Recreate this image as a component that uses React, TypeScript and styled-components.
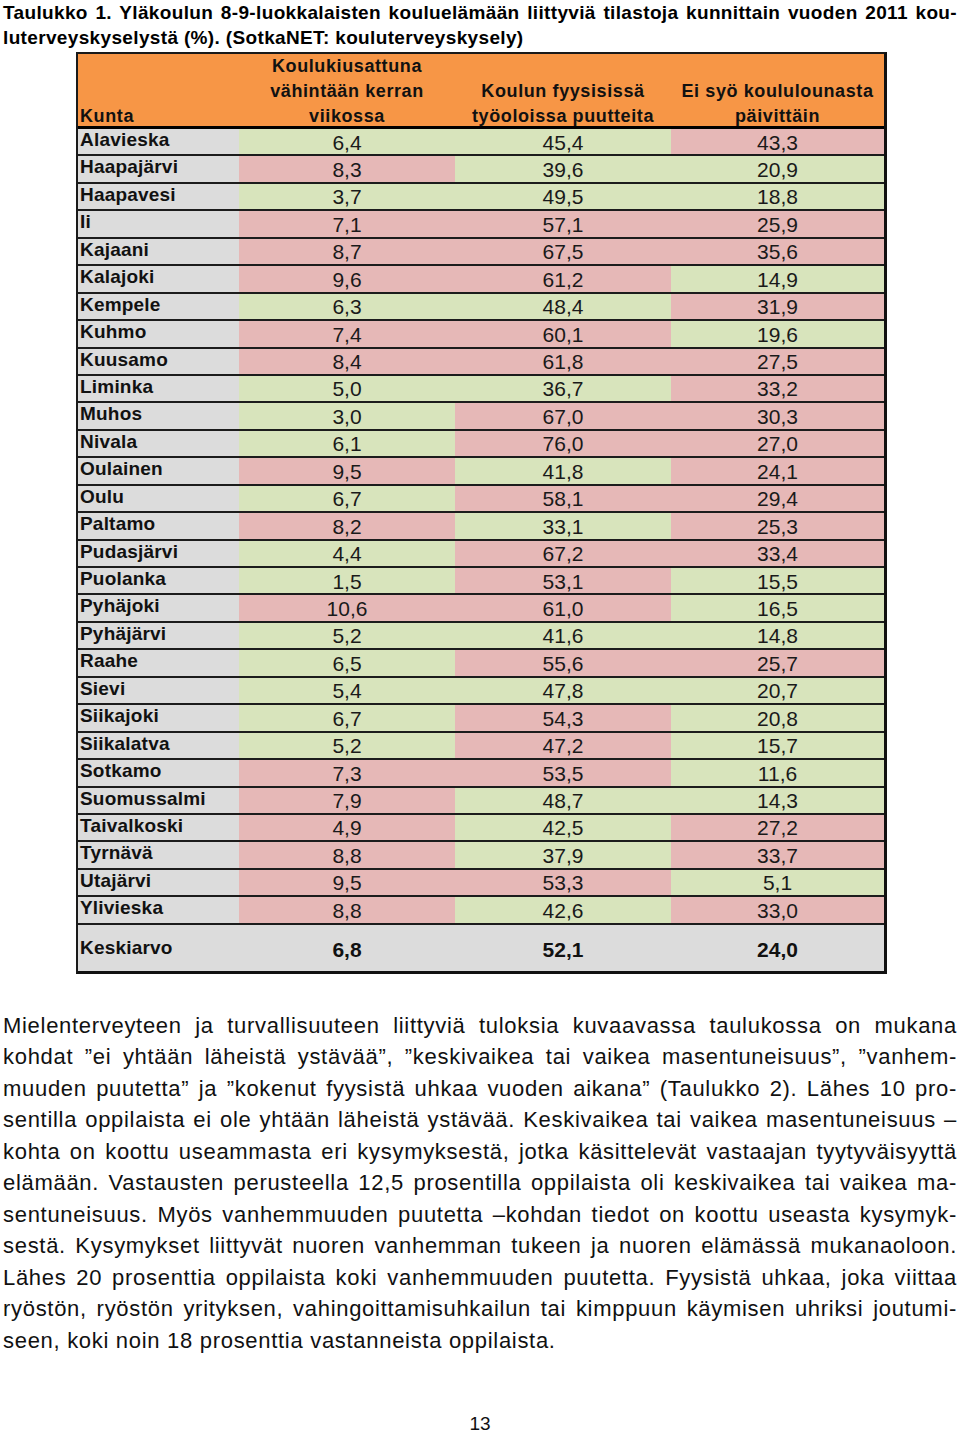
import React from "react";
import styled, { createGlobalStyle } from "styled-components";

const GlobalStyle = createGlobalStyle`
  html, body {
    margin: 0;
    padding: 0;
    background: #ffffff;
  }
  body {
    font-family: "Liberation Sans", Arial, Helvetica, sans-serif;
    color: #000000;
  }
  * { box-sizing: border-box; }
`;

type Tone = "g" | "p";
type Cell = [string, Tone];
type RowData = { name: string; cells: Cell[] };

const rows: RowData[] = [
  { name: "Alavieska", cells: [["6,4", "g"], ["45,4", "g"], ["43,3", "p"]] },
  { name: "Haapajärvi", cells: [["8,3", "p"], ["39,6", "g"], ["20,9", "g"]] },
  { name: "Haapavesi", cells: [["3,7", "g"], ["49,5", "g"], ["18,8", "g"]] },
  { name: "Ii", cells: [["7,1", "p"], ["57,1", "p"], ["25,9", "p"]] },
  { name: "Kajaani", cells: [["8,7", "p"], ["67,5", "p"], ["35,6", "p"]] },
  { name: "Kalajoki", cells: [["9,6", "p"], ["61,2", "p"], ["14,9", "g"]] },
  { name: "Kempele", cells: [["6,3", "g"], ["48,4", "g"], ["31,9", "p"]] },
  { name: "Kuhmo", cells: [["7,4", "p"], ["60,1", "p"], ["19,6", "g"]] },
  { name: "Kuusamo", cells: [["8,4", "p"], ["61,8", "p"], ["27,5", "p"]] },
  { name: "Liminka", cells: [["5,0", "g"], ["36,7", "g"], ["33,2", "p"]] },
  { name: "Muhos", cells: [["3,0", "g"], ["67,0", "p"], ["30,3", "p"]] },
  { name: "Nivala", cells: [["6,1", "g"], ["76,0", "p"], ["27,0", "p"]] },
  { name: "Oulainen", cells: [["9,5", "p"], ["41,8", "g"], ["24,1", "p"]] },
  { name: "Oulu", cells: [["6,7", "g"], ["58,1", "p"], ["29,4", "p"]] },
  { name: "Paltamo", cells: [["8,2", "p"], ["33,1", "g"], ["25,3", "p"]] },
  { name: "Pudasjärvi", cells: [["4,4", "g"], ["67,2", "p"], ["33,4", "p"]] },
  { name: "Puolanka", cells: [["1,5", "g"], ["53,1", "p"], ["15,5", "g"]] },
  { name: "Pyhäjoki", cells: [["10,6", "p"], ["61,0", "p"], ["16,5", "g"]] },
  { name: "Pyhäjärvi", cells: [["5,2", "g"], ["41,6", "g"], ["14,8", "g"]] },
  { name: "Raahe", cells: [["6,5", "g"], ["55,6", "p"], ["25,7", "p"]] },
  { name: "Sievi", cells: [["5,4", "g"], ["47,8", "g"], ["20,7", "g"]] },
  { name: "Siikajoki", cells: [["6,7", "g"], ["54,3", "p"], ["20,8", "g"]] },
  { name: "Siikalatva", cells: [["5,2", "g"], ["47,2", "p"], ["15,7", "g"]] },
  { name: "Sotkamo", cells: [["7,3", "p"], ["53,5", "p"], ["11,6", "g"]] },
  { name: "Suomussalmi", cells: [["7,9", "p"], ["48,7", "g"], ["14,3", "g"]] },
  { name: "Taivalkoski", cells: [["4,9", "p"], ["42,5", "g"], ["27,2", "p"]] },
  { name: "Tyrnävä", cells: [["8,8", "p"], ["37,9", "g"], ["33,7", "p"]] },
  { name: "Utajärvi", cells: [["9,5", "p"], ["53,3", "p"], ["5,1", "g"]] },
  { name: "Ylivieska", cells: [["8,8", "p"], ["42,6", "g"], ["33,0", "p"]] },
];

const paragraphLines = [
  "Mielenterveyteen ja turvallisuuteen liittyviä tuloksia kuvaavassa taulukossa on mukana",
  "kohdat ”ei yhtään läheistä ystävää”, ”keskivaikea tai vaikea masentuneisuus”, ”vanhem-",
  "muuden puutetta” ja ”kokenut fyysistä uhkaa vuoden aikana” (Taulukko 2). Lähes 10 pro-",
  "sentilla oppilaista ei ole yhtään läheistä ystävää. Keskivaikea tai vaikea masentuneisuus –",
  "kohta on koottu useammasta eri kysymyksestä, jotka käsittelevät vastaajan tyytyväisyyttä",
  "elämään. Vastausten perusteella 12,5 prosentilla oppilaista oli keskivaikea tai vaikea ma-",
  "sentuneisuus. Myös vanhemmuuden puutetta –kohdan tiedot on koottu useasta kysymyk-",
  "sestä. Kysymykset liittyvät nuoren vanhemman tukeen ja nuoren elämässä mukanaoloon.",
  "Lähes 20 prosenttia oppilaista koki vanhemmuuden puutetta. Fyysistä uhkaa, joka viittaa",
  "ryöstön, ryöstön yrityksen, vahingoittamisuhkailun tai kimppuun käymisen uhriksi joutumi-",
  "seen, koki noin 18 prosenttia vastanneista oppilaista.",
];

const toneColor: Record<Tone, string> = {
  g: "#d8e4bc",
  p: "#e6b8b7",
};

const COLS = "161px 216px 216px 213px";

const Page = styled.div`
  width: 960px;
  padding: 0 3px;
`;

const Title = styled.div`
  font-size: 19px;
  font-weight: 700;
  line-height: 25px;
  letter-spacing: 0.35px;
`;

const Line = styled.div<{ $justify?: boolean }>`
  text-align: ${(p) => (p.$justify ? "justify" : "left")};
  text-align-last: ${(p) => (p.$justify ? "justify" : "left")};
`;

const Table = styled.div`
  margin: 2px 0 0 73px;
  width: 811px;
  border-top: 2px solid #1a1a1a;
  border-left: 2px solid #1a1a1a;
  border-right: 3px solid #111111;
  border-bottom: 3px solid #111111;
`;

const HeaderRow = styled.div`
  display: grid;
  grid-template-columns: ${COLS};
  height: 75px;
  background: #f79646;
  border-bottom: 3px solid #000000;
`;

const HeaderCell = styled.div<{ $left?: boolean }>`
  display: flex;
  flex-direction: column;
  justify-content: flex-end;
  align-items: ${(p) => (p.$left ? "flex-start" : "center")};
  text-align: ${(p) => (p.$left ? "left" : "center")};
  padding: 0 0 3px ${(p) => (p.$left ? "2px" : "0")};
  font-size: 18px;
  font-weight: 700;
  line-height: 25px;
  letter-spacing: 0.6px;
  color: #111111;
  white-space: nowrap;
`;

const Row = styled.div`
  display: grid;
  grid-template-columns: ${COLS};
  height: 27.45px;
  border-bottom: 2px solid #1c1c1c;
`;

const NameCell = styled.div`
  background: #dcdcdc;
  padding: 1px 0 0 2px;
  font-size: 19px;
  font-weight: 700;
  line-height: 20px;
  letter-spacing: 0.2px;
  color: #111111;
  white-space: nowrap;
  overflow: hidden;
`;

const ValueCell = styled.div<{ $tone: Tone }>`
  background: ${(p) => toneColor[p.$tone]};
  padding-top: 1.5px;
  text-align: center;
  font-size: 21px;
  line-height: 24px;
  color: #1a1a1a;
  overflow: hidden;
`;

const AverageRow = styled.div`
  display: grid;
  grid-template-columns: ${COLS};
  height: 46px;
  background: #dcdcdc;
`;

const AverageName = styled.div`
  padding: 13px 0 0 2px;
  font-size: 19px;
  font-weight: 700;
  line-height: 20px;
  letter-spacing: 0.2px;
  color: #111111;
`;

const AverageValue = styled.div`
  padding-top: 13.5px;
  text-align: center;
  font-size: 21px;
  font-weight: 700;
  line-height: 24px;
  color: #111111;
`;

const Paragraph = styled.div`
  margin-top: 36px;
  font-size: 22px;
  line-height: 31.5px;
  letter-spacing: 0.7px;
  color: #111111;
`;

const PageNumber = styled.div`
  margin-top: 57px;
  text-align: center;
  font-size: 19px;
  line-height: 22px;
  color: #111111;
`;

export default function App() {
  return (
    <>
      <GlobalStyle />
      <Page>
        <Title>
          <Line $justify>
            Taulukko 1. Yläkoulun 8-9-luokkalaisten kouluelämään liittyviä tilastoja kunnittain vuoden 2011 kou-
          </Line>
          <Line>luterveyskyselystä (%). (SotkaNET: kouluterveyskysely)</Line>
        </Title>

        <Table>
          <HeaderRow>
            <HeaderCell $left>Kunta</HeaderCell>
            <HeaderCell>
              <span>Koulukiusattuna</span>
              <span>vähintään kerran</span>
              <span>viikossa</span>
            </HeaderCell>
            <HeaderCell>
              <span>Koulun fyysisissä</span>
              <span>työoloissa puutteita</span>
            </HeaderCell>
            <HeaderCell>
              <span>Ei syö koululounasta</span>
              <span>päivittäin</span>
            </HeaderCell>
          </HeaderRow>

          {rows.map((r) => (
            <Row key={r.name}>
              <NameCell>{r.name}</NameCell>
              {r.cells.map(([v, t], i) => (
                <ValueCell key={i} $tone={t}>
                  {v}
                </ValueCell>
              ))}
            </Row>
          ))}

          <AverageRow>
            <AverageName>Keskiarvo</AverageName>
            <AverageValue>6,8</AverageValue>
            <AverageValue>52,1</AverageValue>
            <AverageValue>24,0</AverageValue>
          </AverageRow>
        </Table>

        <Paragraph>
          {paragraphLines.map((l, i) => (
            <Line key={i} $justify={i < paragraphLines.length - 1}>
              {l}
            </Line>
          ))}
        </Paragraph>

        <PageNumber>13</PageNumber>
      </Page>
    </>
  );
}
